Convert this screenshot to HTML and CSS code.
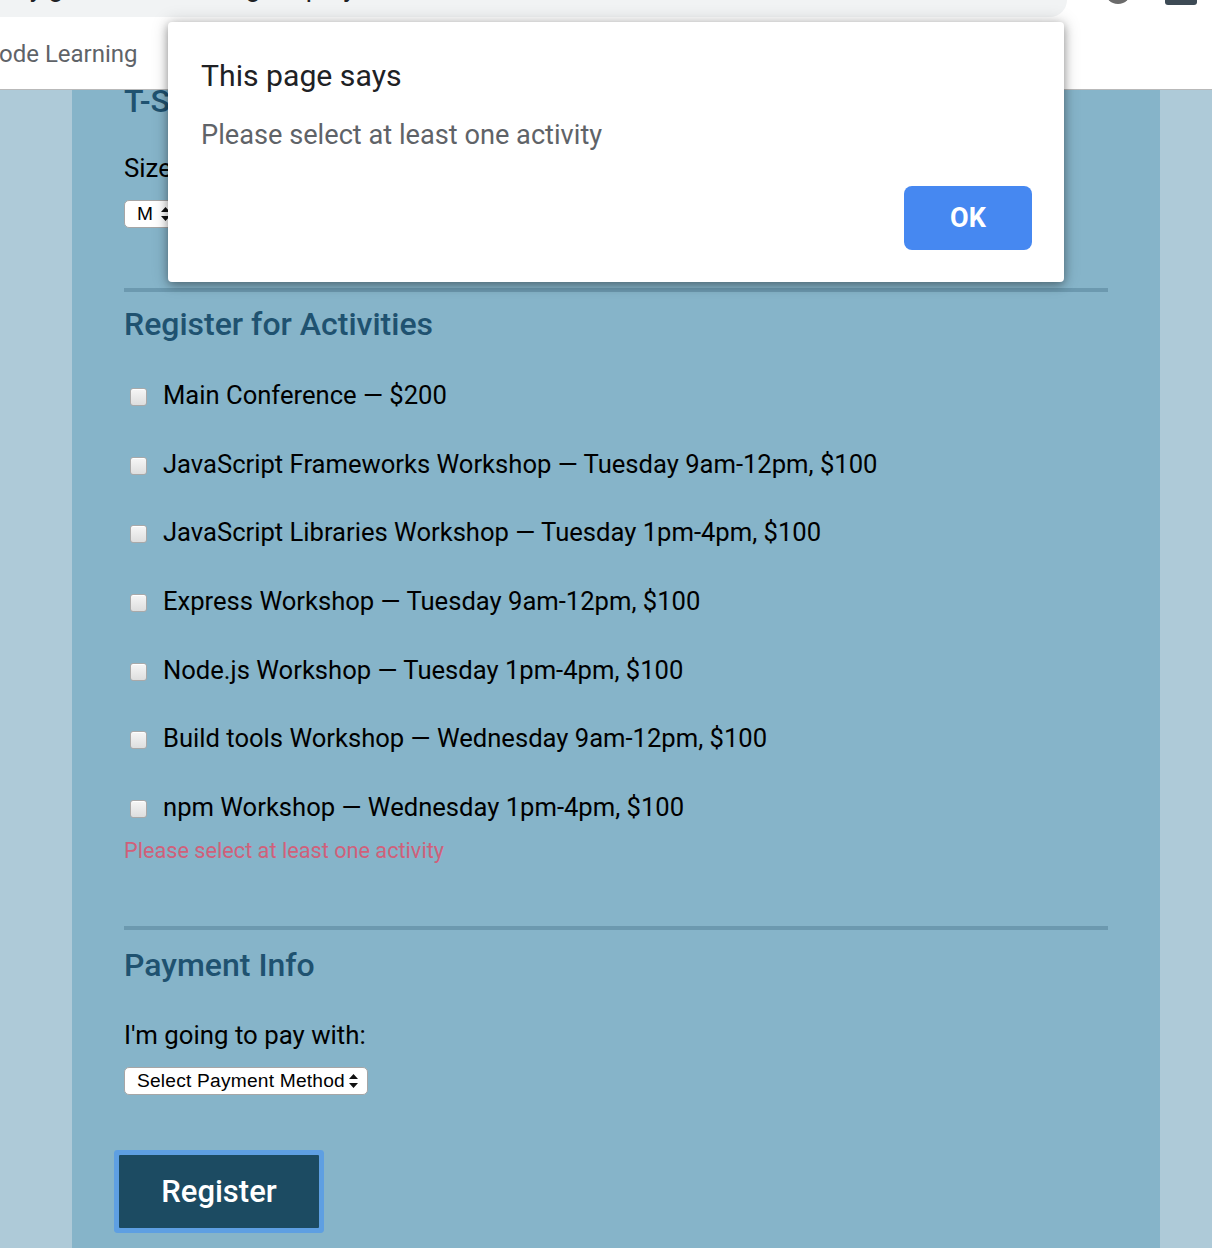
FILE: index.html
```html
<!DOCTYPE html>
<html lang="en">
<head>
<meta charset="utf-8">
<title>Conference Registration</title>
<link rel="stylesheet" href="styles.css">
</head>
<body>
<header class="browser">
  <div class="toolbar">
    <div class="omnibox"><span class="url">my.github.io/techdegree-project-3/form/index.html</span></div>
    <div class="tb-icons"><span class="profile"></span><span class="menu-btn"></span></div>
  </div>
  <nav class="bookmarks"><span class="bookmark">ode Learning</span></nav>
</header>

<div class="viewport">
  <main class="container">
    <form class="form">
      <section class="section">
        <h2 class="section-title first">T-Shirt Info</h2>
        <label class="field-label">Size:</label>
        <div class="select select-size">
          <span>M</span>
          <svg class="arrows" width="9" height="14" viewBox="0 0 9 14"><path d="M4.5 0 L9 5 H0 Z M0 9 H9 L4.5 14 Z" fill="#111"/></svg>
        </div>
      </section>

      <hr class="rule">

      <section class="section">
        <h2 class="section-title">Register for Activities</h2>
        <ul class="activity-list">
          <li class="activity"><input type="checkbox" class="check"><span>Main Conference — $200</span></li>
          <li class="activity"><input type="checkbox" class="check"><span>JavaScript Frameworks Workshop — Tuesday 9am-12pm, $100</span></li>
          <li class="activity"><input type="checkbox" class="check"><span>JavaScript Libraries Workshop — Tuesday 1pm-4pm, $100</span></li>
          <li class="activity"><input type="checkbox" class="check"><span>Express Workshop — Tuesday 9am-12pm, $100</span></li>
          <li class="activity"><input type="checkbox" class="check"><span>Node.js Workshop — Tuesday 1pm-4pm, $100</span></li>
          <li class="activity"><input type="checkbox" class="check"><span>Build tools Workshop — Wednesday 9am-12pm, $100</span></li>
          <li class="activity"><input type="checkbox" class="check"><span>npm Workshop — Wednesday 1pm-4pm, $100</span></li>
        </ul>
        <p class="error">Please select at least one activity</p>
      </section>

      <hr class="rule rule-2">

      <section class="section">
        <h2 class="section-title payment-title">Payment Info</h2>
        <label class="field-label">I'm going to pay with:</label>
        <div class="select select-payment">
          <span>Select Payment Method</span>
          <svg class="arrows" width="9" height="14" viewBox="0 0 9 14"><path d="M4.5 0 L9 5 H0 Z M0 9 H9 L4.5 14 Z" fill="#111"/></svg>
        </div>
      </section>

      <button type="button" class="register">Register</button>
    </form>
  </main>
</div>

<div class="dialog" role="alertdialog">
  <h1 class="dialog-title">This page says</h1>
  <p class="dialog-msg">Please select at least one activity</p>
  <div class="dialog-actions"><button type="button" class="ok">OK</button></div>
</div>
</body>
</html>
```

FILE: styles.css
```css
* { box-sizing: border-box; }

html, body {
  margin: 0;
  padding: 0;
  height: 100%;
}

body {
  font-family: "Roboto", "Noto Sans", sans-serif;
  background: #aecad8;
  overflow: hidden;
}

/* ---------- browser chrome ---------- */
.browser {
  background: #ffffff;
}

.toolbar {
  height: 18px;
  display: flex;
  align-items: flex-start;
  overflow: hidden;
}

.omnibox {
  width: 1067px;
  height: 17px;
  background: #f1f3f4;
  border-bottom-right-radius: 17px;
  overflow: hidden;
  position: relative;
}

.url {
  display: block;
  font-size: 27px;
  line-height: 27px;
  color: #202124;
  margin-top: -26px;
  margin-left: 6px;
  white-space: nowrap;
}

.tb-icons {
  display: flex;
  align-items: flex-start;
  gap: 34px;
  margin-left: 38px;
}

.profile {
  width: 26px;
  height: 26px;
  border-radius: 50%;
  background: #6b6b6b;
  margin-top: -22px;
}

.menu-btn {
  width: 32px;
  height: 18px;
  border-radius: 3px;
  background: #3d4a55;
  margin-top: -13px;
}

.bookmarks {
  height: 72px;
  border-bottom: 1px solid #b9b9b9;
  display: flex;
  align-items: flex-start;
}

.bookmark {
  font-size: 24px;
  line-height: 28px;
  color: #5f6368;
  margin-top: 22px;
  margin-left: -1px;
  white-space: nowrap;
}

/* ---------- page ---------- */
.viewport {
  height: 1158px;
  overflow: hidden;
}

.container {
  width: 1088px;
  min-height: 100%;
  margin-left: 72px;
  background: #86b4c9;
  padding: 0 52px;
}

.form {
  display: flex;
  flex-direction: column;
  align-items: flex-start;
}

.section {
  display: flex;
  flex-direction: column;
  align-items: flex-start;
  width: 100%;
}

.section-title {
  margin: 14px 0 0;
  font-size: 32px;
  line-height: 36px;
  font-weight: 500;
  color: #1f5270;
}

.section-title.first {
  margin-top: -7px;
}

.section-title.payment-title {
  margin-top: 17px;
}

.field-label {
  display: block;
  margin-top: 34px;
  font-size: 25.8px;
  line-height: 30px;
  color: #000;
}

.payment-title + .field-label {
  margin-top: 37px;
}

.select {
  margin-top: 17px;
  height: 28px;
  background: #ffffff;
  border: 1px solid #a6a6a6;
  border-radius: 5px;
  display: flex;
  align-items: center;
  justify-content: space-between;
  padding: 0 9px 0 12px;
  font-family: "Liberation Sans", Arial, sans-serif;
  font-size: 19.2px;
  letter-spacing: 0.2px;
  color: #000;
}

.select-size {
  width: 56px;
}

.select-payment {
  width: 244px;
}

.arrows {
  display: block;
  flex: none;
}

.rule {
  width: 100%;
  height: 4px;
  margin: 60px 0 0;
  border: 0;
  background: #6c99af;
}

.rule-2 {
  margin-top: 63px;
}

.activity-list {
  list-style: none;
  margin: 38px 0 0;
  padding: 0;
  display: flex;
  flex-direction: column;
  gap: 38.7px;
}

.activity {
  display: flex;
  align-items: flex-start;
  height: 30px;
  font-size: 25.6px;
  line-height: 30px;
  color: #000;
}

.check {
  appearance: none;
  -webkit-appearance: none;
  width: 17px;
  height: 18px;
  margin: 8px 16px 0 6px;
  border: 1px solid #a9a9a9;
  border-radius: 3px;
  background: linear-gradient(#f6f6f6, #dedede);
  box-shadow: inset 0 1px 0 #fff;
  flex: none;
}

.error {
  margin: 17px 0 0;
  font-size: 21.7px;
  line-height: 24px;
  color: #d0607a;
}

.register {
  margin: 60px 0 0 -5px;
  width: 200px;
  height: 73px;
  border: 0;
  border-radius: 1px;
  background: #1c4b62;
  color: #ffffff;
  font-family: "Roboto", sans-serif;
  font-size: 31px;
  font-weight: 500;
  box-shadow: 0 0 0 5px #5e9fe2;
  padding: 0;
}

/* ---------- alert dialog ---------- */
.dialog {
  position: absolute;
  left: 168px;
  top: 22px;
  width: 896px;
  height: 260px;
  background: #ffffff;
  border-radius: 4px;
  box-shadow: 0 3px 10px rgba(0, 0, 0, 0.35), 0 0 18px rgba(0, 0, 0, 0.18);
  padding: 36px 32px 0 33px;
  display: flex;
  flex-direction: column;
}

.dialog-title {
  margin: 0;
  font-size: 30.2px;
  line-height: 36px;
  font-weight: 400;
  color: #202124;
}

.dialog-msg {
  margin: 25px 0 0;
  font-size: 27.2px;
  line-height: 32px;
  color: #5f6368;
}

.dialog-actions {
  margin-top: 35px;
  display: flex;
  justify-content: flex-end;
}

.ok {
  width: 128px;
  height: 64px;
  border: 0;
  border-radius: 8px;
  background: #4688f1;
  color: #ffffff;
  font-family: "Roboto", sans-serif;
  font-size: 27px;
  font-weight: 700;
  padding: 0;
}
```
